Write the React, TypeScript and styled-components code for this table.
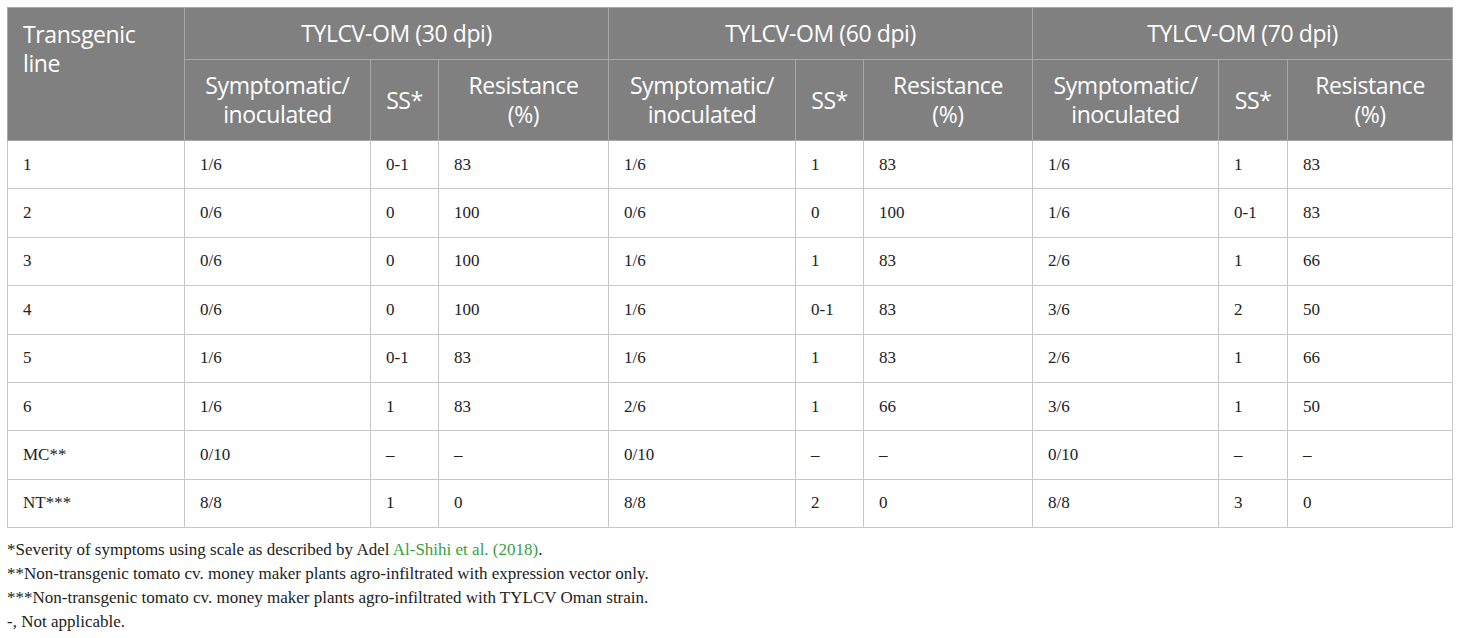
import { FC } from "react";
import styled, { createGlobalStyle } from "styled-components";

const GlobalStyle = createGlobalStyle`
  body {
    margin: 0;
    background: #fff;
  }
`;

const Page = styled.div`
  padding: 7px 8px 0 7px;
  width: 1445px;
`;

const Table = styled.table`
  width: 1445px;
  border-collapse: collapse;
  table-layout: fixed;
`;

const HeadCell = styled.th<{ $left?: boolean }>`
  background-color: #808080;
  color: #fff;
  font-family: "Open Sans", "Noto Sans", sans-serif;
  font-weight: 400;
  font-size: 23px;
  line-height: 29px;
  letter-spacing: -0.4px;
  border: 1px solid #a8a8a8;
  text-align: ${(p) => (p.$left ? "left" : "center")};
  vertical-align: ${(p) => (p.$left ? "top" : "middle")};
  padding: ${(p) => (p.$left ? "12px 15px" : "0 8px")};
`;

const TopRow = styled.tr`
  height: 52px;
`;

const SubRow = styled.tr`
  height: 81px;
`;

const BodyRow = styled.tr`
  height: 48.4px;
`;

const Cell = styled.td`
  font-family: "Liberation Serif", "Times New Roman", serif;
  font-size: 17px;
  color: #222;
  border: 1px solid #c8c8c8;
  padding: 0 15px;
  vertical-align: middle;
`;

const Notes = styled.div`
  font-family: "Liberation Serif", "Times New Roman", serif;
  font-size: 17px;
  line-height: 24px;
  color: #222;
  padding-top: 10px;
`;

const Note = styled.div``;

const Link = styled.span`
  color: #3a9f46;
`;

const widths = [177, 186, 68, 170, 187, 68, 169, 186, 69, 165];
const groups = ["TYLCV-OM (30 dpi)", "TYLCV-OM (60 dpi)", "TYLCV-OM (70 dpi)"];

const rows: string[][] = [
  ["1", "1/6", "0-1", "83", "1/6", "1", "83", "1/6", "1", "83"],
  ["2", "0/6", "0", "100", "0/6", "0", "100", "1/6", "0-1", "83"],
  ["3", "0/6", "0", "100", "1/6", "1", "83", "2/6", "1", "66"],
  ["4", "0/6", "0", "100", "1/6", "0-1", "83", "3/6", "2", "50"],
  ["5", "1/6", "0-1", "83", "1/6", "1", "83", "2/6", "1", "66"],
  ["6", "1/6", "1", "83", "2/6", "1", "66", "3/6", "1", "50"],
  ["MC**", "0/10", "–", "–", "0/10", "–", "–", "0/10", "–", "–"],
  ["NT***", "8/8", "1", "0", "8/8", "2", "0", "8/8", "3", "0"],
];

const App: FC = () => {
  return (
    <Page>
      <GlobalStyle />
      <Table>
        <colgroup>
          {widths.map((w, i) => (
            <col key={i} style={{ width: w }} />
          ))}
        </colgroup>
        <thead>
          <TopRow>
            <HeadCell $left rowSpan={2}>
              Transgenic
              <br />
              line
            </HeadCell>
            {groups.map((g) => (
              <HeadCell key={g} colSpan={3}>
                {g}
              </HeadCell>
            ))}
          </TopRow>
          <SubRow>
            {groups.map((g) => [
              <HeadCell key={g + "a"}>
                Symptomatic/
                <br />
                inoculated
              </HeadCell>,
              <HeadCell key={g + "b"}>SS*</HeadCell>,
              <HeadCell key={g + "c"}>
                Resistance
                <br />
                (%)
              </HeadCell>,
            ])}
          </SubRow>
        </thead>
        <tbody>
          {rows.map((r) => (
            <BodyRow key={r[0]}>
              {r.map((v, i) => (
                <Cell key={i}>{v}</Cell>
              ))}
            </BodyRow>
          ))}
        </tbody>
      </Table>
      <Notes>
        <Note>
          *Severity of symptoms using scale as described by Adel <Link>Al-Shihi et al. (2018)</Link>.
        </Note>
        <Note>**Non-transgenic tomato cv. money maker plants agro-infiltrated with expression vector only.</Note>
        <Note>***Non-transgenic tomato cv. money maker plants agro-infiltrated with TYLCV Oman strain.</Note>
        <Note>-, Not applicable.</Note>
      </Notes>
    </Page>
  );
};

export default App;
